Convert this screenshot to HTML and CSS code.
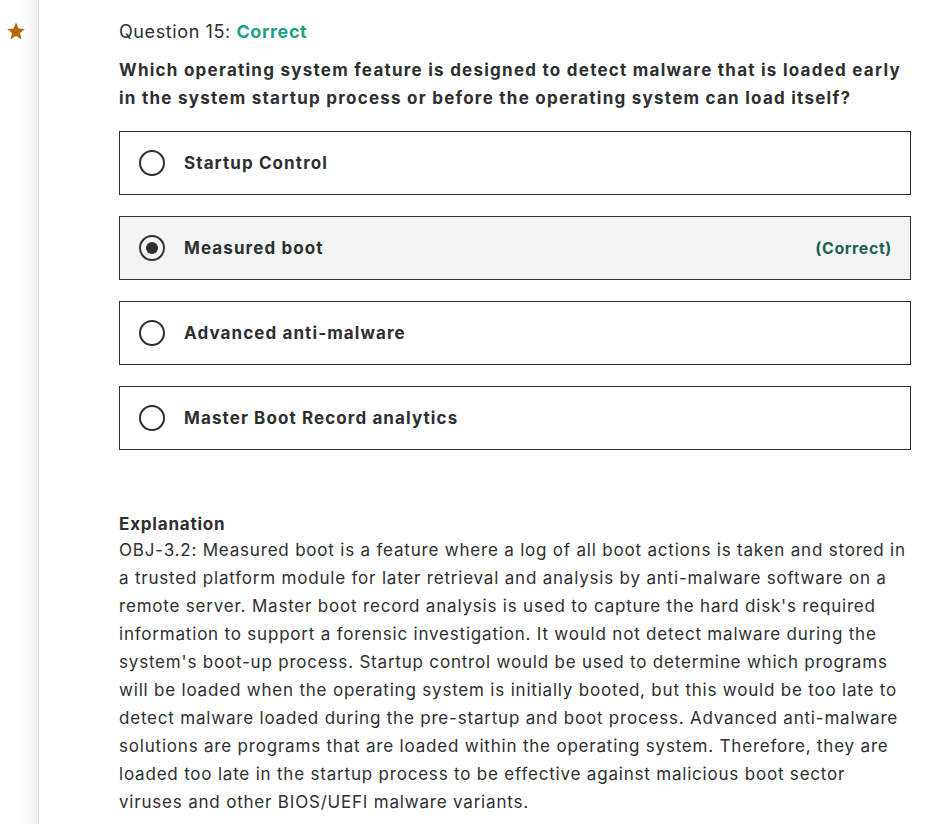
FILE: index.html
```html
<!DOCTYPE html>
<html>
<head>
<meta charset="utf-8">
<link rel="stylesheet" href="styles.css">
</head>
<body>
<div class="page">
  <aside class="rail">
    <svg class="star" width="20" height="20" viewBox="0 0 24 24"><path d="M12 1.8l3 7.1 7.6.6-5.8 5 1.8 7.5L12 18l-6.6 4 1.8-7.5-5.8-5 7.6-.6z" fill="#b4690e"/></svg>
  </aside>
  <main class="content">
    <div class="qlabel">Question 15: <span class="ok">Correct</span></div>
    <h2 class="qtext">Which operating system feature is designed to detect malware that is loaded early in the system startup process or before the operating system can load itself?</h2>
    <ul class="answers">
      <li class="answer"><span class="radio"></span><span class="atext">Startup Control</span></li>
      <li class="answer selected"><span class="radio on"></span><span class="atext">Measured boot</span><span class="tag">(Correct)</span></li>
      <li class="answer"><span class="radio"></span><span class="atext">Advanced anti-malware</span></li>
      <li class="answer"><span class="radio"></span><span class="atext">Master Boot Record analytics</span></li>
    </ul>
    <section class="explain">
      <div class="ehead">Explanation</div>
      <p class="ebody">OBJ-3.2: Measured boot is a feature where a log of all boot actions is taken and stored in a trusted platform module for later retrieval and analysis by anti-malware software on a remote server. Master boot record analysis is used to capture the hard disk's required information to support a forensic investigation. It would not detect malware during the system's boot-up process. Startup control would be used to determine which programs will be loaded when the operating system is initially booted, but this would be too late to detect malware loaded during the pre-startup and boot process. Advanced anti-malware solutions are programs that are loaded within the operating system. Therefore, they are loaded too late in the startup process to be effective against malicious boot sector viruses and other BIOS/UEFI malware variants.</p>
    </section>
  </main>
</div>
</body>
</html>
```
FILE: styles.css
```css
* { box-sizing: border-box; }
html, body { margin: 0; padding: 0; background: #fff; }
body { font-family: Inter, "Noto Sans", sans-serif; color: #2d2f31; }
.page { display: flex; min-height: 824px; }
.rail {
  width: 39px; flex: none;
  background: linear-gradient(to right, #fff 0%, #fff 55%, #f1f2f3 100%);
  border-right: 1px solid #d1d7dc;
  padding-top: 21px;
  display: flex; justify-content: flex-start;
}
.star { margin-left: 6px; }
.content { width: 792px; margin-left: 80px; padding-top: 20px; }
.qlabel { font-size: 18px; line-height: 24px; letter-spacing: 0.6px; }
.ok { color: #1ea086; font-weight: 700; }
.qtext { margin: 12px 0 19px; font-size: 17px; line-height: 28px; font-weight: 700; letter-spacing: 1.25px; }
.answers { list-style: none; margin: 0; padding: 0; display: flex; flex-direction: column; gap: 21px; }
.answer {
  height: 64px; border: 1px solid #2d2f31; display: flex; align-items: center;
  padding: 0 18px 0 19px;
}
.answer.selected { background: #f1f5f4; }
.radio { width: 26px; height: 26px; border: 2px solid #2d2f31; border-radius: 50%; flex: none; display: flex; align-items: center; justify-content: center; }
.radio.on::after { content: ""; width: 12px; height: 12px; border-radius: 50%; background: #2d2f31; }
.atext { margin-left: 19px; font-size: 17px; font-weight: 700; flex: 1; letter-spacing: 1.1px; }
.tag { color: #1e6055; font-weight: 700; font-size: 16px; letter-spacing: 0.6px; }
.explain { margin-top: 62px; }
.ehead { font-size: 17px; font-weight: 700; line-height: 24px; letter-spacing: 0.8px; }
.ebody { margin: 0; font-size: 17px; line-height: 28px; letter-spacing: 0.8px; }
```
